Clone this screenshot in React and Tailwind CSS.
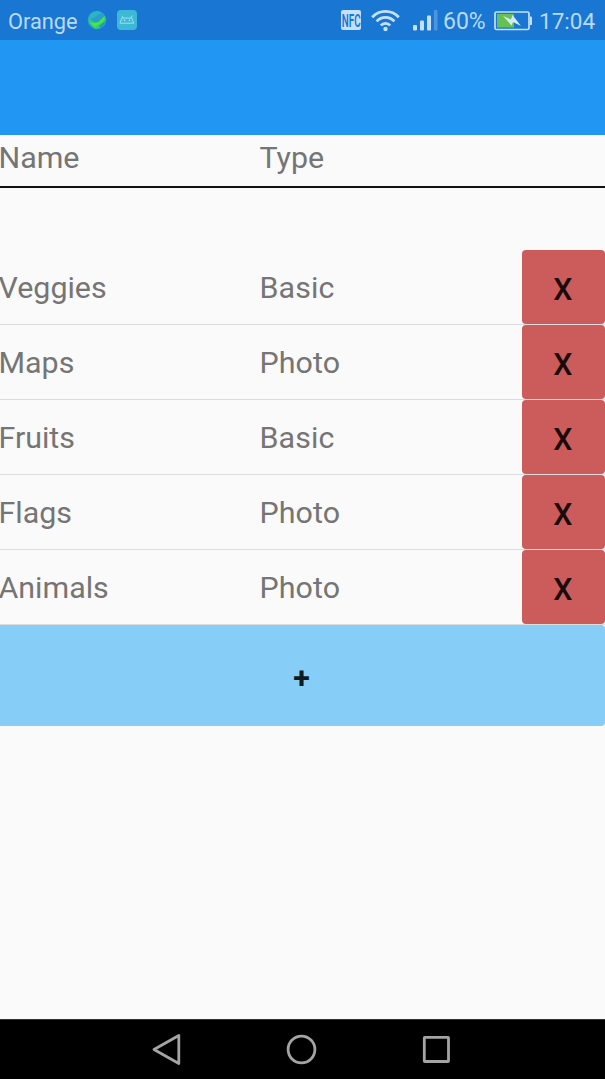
const items = [
  { name: "Veggies", type: "Basic" },
  { name: "Maps", type: "Photo" },
  { name: "Fruits", type: "Basic" },
  { name: "Flags", type: "Photo" },
  { name: "Animals", type: "Photo" },
];

function StatusBar() {
  return (
    <div className="flex h-10 w-full shrink-0 items-center bg-[#1976d2] text-[22.7px] leading-10 text-[#b9daf6]">
      <span className="ml-2 w-[70px] pt-[3px] text-[21.8px]">Orange</span>
      <svg className="ml-[9px] shrink-0" width="20" height="20" viewBox="0 0 20 20">
        <circle cx="10" cy="10" r="9.3" fill="#2a9dcc" />
        <path d="M3 4.5Q6 1 11 1l4 2-5 2-3 3-5 1z" fill="#27b6c4" />
        <path d="M1.5 8 7 12l3 1 7.5-7 1.5 4-3 3-3 5-5 1-3-3-3-3z" fill="#30cf72" />
        <path d="M3 13h5l4-1 6-6-2 6-4 2-4 3z" fill="#4be83d" />
        <path d="m12 16 5-4-1 4-3 2z" fill="#2396c8" />
      </svg>
      <svg className="ml-[10px] shrink-0" width="20" height="20" viewBox="0 0 20 20">
        <rect width="20" height="20" rx="4" fill="#3db8d6" />
        <path d="M5.3 8h9.4l2 5.2H3.3zM6 8 5 6M14 8l1-2" fill="none" stroke="#9be0ee" strokeWidth="1" strokeLinecap="round" strokeLinejoin="round" />
        <circle cx="7.5" cy="10.3" r=".8" fill="#b9edf5" />
        <circle cx="12.5" cy="10.3" r=".8" fill="#b9edf5" />
      </svg>
      <span className="ml-auto flex h-5 w-5 items-center justify-center rounded-[2px] bg-[#c5e1f9]">
        <span className="scale-x-[.58] scale-y-110 text-[17px] leading-5 font-semibold text-[#1976d2]">NFC</span>
      </span>
      <svg className="ml-[10px] shrink-0" width="29" height="23" viewBox="0 0 29 23" fill="none" stroke="#c5e1f9" strokeWidth="2.8">
        <path d="M1.2 8.2C8.5 .3 20.5 .3 27.8 8.2M5.6 12.4c5-5.3 12.8-5.3 17.8 0M9.8 16.4c2.7-2.8 6.7-2.8 9.4 0" />
        <circle cx="14.5" cy="20" r="2.2" fill="#c5e1f9" stroke="none" />
      </svg>
      <svg className="ml-[13px] shrink-0" width="25" height="22" viewBox="0 0 25 22" fill="#c5e1f9">
        <rect x="0" y="16" width="4" height="5.5" rx="1" />
        <rect x="7" y="11.5" width="4" height="10" rx="1" />
        <rect x="14" y="6.5" width="4" height="15" rx="1" />
        <rect x="21" y="1" width="3.5" height="20.5" rx="1" opacity=".3" />
      </svg>
      <span className="ml-[5px] w-[45px] pt-[3px] text-[23px] whitespace-nowrap">60%</span>
      <svg className="mt-px ml-[6px] shrink-0" width="39" height="20" viewBox="0 0 39 20">
        <rect x="1" y="1" width="34" height="17.5" rx="1.5" fill="none" stroke="#c5e1f9" strokeWidth="1.7" />
        <rect x="3" y="3" width="17" height="13.5" fill="#67c052" />
        <path d="M36 5.5h1q1 0 1 1V13q0 1-1 1h-1z" fill="#c5e1f9" />
        <path d="m9 5 8 3.5L18.5 4l8.5 11-8-4-1.5 3.5z" fill="#d4e9fa" />
      </svg>
      <span className="mr-[10px] ml-[6px] w-[56px] pt-[2px] text-[22.5px] whitespace-nowrap">17:04</span>
    </div>
  );
}

function NavigationBar() {
  return (
    <nav className="h-[60px] w-full shrink-0 border-t border-[#333] bg-black">
      <svg className="block" width="605" height="59" viewBox="0 1 605 59" fill="none" stroke="#a4a4a4" strokeWidth="2.8" strokeLinejoin="round">
        <path d="M178.8 16.5v28L154 30.5z" />
        <circle cx="301.5" cy="30.5" r="13.4" />
        <rect x="424.3" y="18.3" width="24.2" height="24.2" rx=".5" />
      </svg>
    </nav>
  );
}

export default function App() {
  return (
    <div className="flex h-[1079px] w-[605px] flex-col overflow-hidden bg-[#fafafa] font-['Roboto',sans-serif] text-[30.4px] text-[#757575]">
      <StatusBar />
      <header className="h-[95px] shrink-0 bg-[#2196f3]" />
      <div className="grid h-[53px] shrink-0 grid-cols-[259.5px_1fr] border-b-2 border-[#111] leading-[45px]">
        <span className="-ml-[1.5px]">Name</span>
        <span>Type</span>
      </div>
      <main className="flex-1 pt-[62px]">
        {items.map(({ name, type }) => (
          <div key={name} className="grid h-[75px] grid-cols-[259.5px_262px_1fr] border-b border-[#dcdcdc] leading-[75px]">
            <span className="-ml-[1.5px]">{name}</span>
            <span className="tracking-[0.1px]">{type}</span>
            <button className="h-[74px] rounded-[4px] bg-[#cc5b5b] pt-[3px] pr-px leading-[71px] font-medium text-[#190b0b]">
              <span className="inline-block scale-y-105">X</span>
            </button>
          </div>
        ))}
        <button className="flex h-[101px] w-full items-center justify-center rounded-r-[4px] bg-[#86cdf8] pt-1 pr-[2px] font-bold text-[#101a20]">+</button>
      </main>
      <NavigationBar />
    </div>
  );
}
